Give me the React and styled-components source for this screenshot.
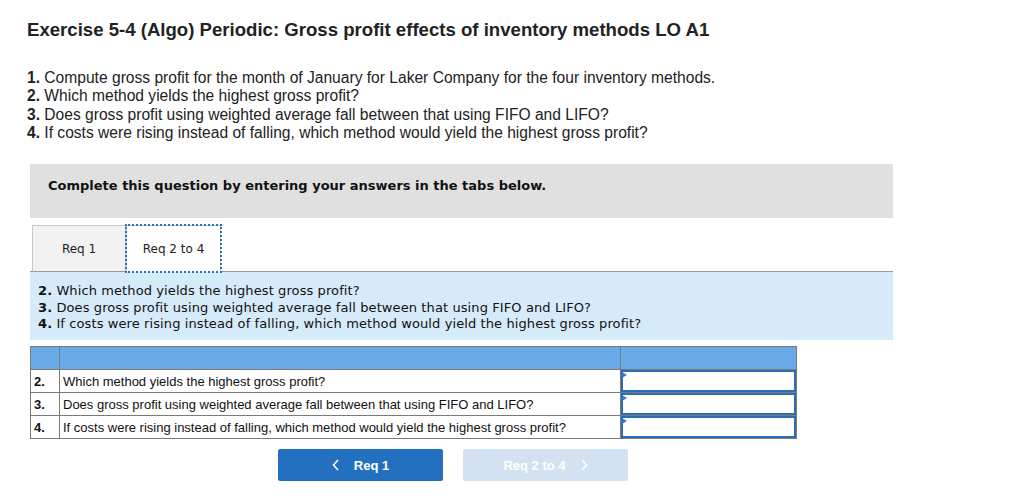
import React from 'react';
import styled, { createGlobalStyle } from 'styled-components';

const GlobalStyle = createGlobalStyle`
  html, body {
    margin: 0;
    padding: 0;
    background: #fff;
  }
  body {
    font-family: 'Liberation Sans', Arial, sans-serif;
    color: #222;
  }
`;

const Page = styled.div`
  width: 1025px;
  padding: 19px 0 0 27px;
  box-sizing: border-box;
`;

const Title = styled.h1`
  margin: 0;
  font-size: 18.6px;
  line-height: 22px;
  font-weight: 700;
  color: #222;
`;

const Intro = styled.ol`
  list-style: none;
  margin: 28px 0 0;
  padding: 0;
  font-size: 15.6px;
  line-height: 18.3px;
  color: #222;
`;

const Num = styled.b`
  font-weight: 700;
`;

const Work = styled.div`
  margin: 22px 0 0 3px;
  width: 863px;
`;

const Prompt = styled.div`
  background: #e0e0e0;
  height: 54px;
  box-sizing: border-box;
  padding: 14px 0 0 18px;
  font-family: 'DejaVu Sans', Verdana, sans-serif;
  font-size: 13px;
  line-height: 16px;
  font-weight: 700;
  color: #111;
`;

const Tabs = styled.div`
  display: flex;
  margin-top: 7px;
  padding-left: 2px;
  border-bottom: 1px solid #999;
`;

const Tab = styled.button`
  width: ${({ wide }) => (wide ? 95 : 94)}px;
  height: 47px;
  margin: 0;
  margin-bottom: -1px;
  box-sizing: border-box;
  border: 1px solid #c8c8c8;
  border-bottom: ${({ active }) => (active ? '1px solid #fff' : '1px solid #999')};
  background: ${({ active }) => (active ? '#fff' : '#f2f2f2')};
  outline: ${({ active }) => (active ? '2px dotted #2a72c4' : 'none')};
  outline-offset: -1px;
  font-family: 'DejaVu Sans', Verdana, sans-serif;
  font-size: 12px;
  color: #222;
  padding: 1px 0 0;
`;

const Questions = styled.div`
  background: #d6ebfa;
  padding: 11px 8px 11px;
  height: 68px;
  box-sizing: border-box;
  font-family: 'DejaVu Sans', Verdana, sans-serif;
  font-size: 13px;
  line-height: 16.5px;
  letter-spacing: 0.1px;
  color: #111;
`;

const Table = styled.table`
  margin-top: 6px;
  width: 767px;
  border-collapse: collapse;
  font-family: 'Liberation Sans', Arial, sans-serif;
  font-size: 13px;
  color: #111;
`;

const HeadCell = styled.th`
  background: #69aae9;
  border: 1px solid #7a7a7a;
  height: 22px;
  padding: 0;
  width: ${({ w }) => (w ? `${w}px` : 'auto')};
`;

const Cell = styled.td`
  border: 1px solid #7a7a7a;
  height: 22px;
  padding: 0 0 0 3px;
  font-weight: ${({ bold }) => (bold ? 700 : 400)};
  width: ${({ w }) => (w ? `${w}px` : 'auto')};
`;

const InputCell = styled.td`
  border: 1px solid #7a7a7a;
  padding: 0;
  width: 175px;
  height: 22px;
`;

const Answer = styled.div`
  position: relative;
  height: 22px;
  box-sizing: border-box;
  border: 2px solid #2c6cb3;
  background: #fff;
  &::before {
    content: '';
    position: absolute;
    left: -1px;
    top: 0;
    border-left: 5px solid #2c7be0;
    border-top: 3px solid transparent;
    border-bottom: 3px solid transparent;
  }
`;

const Nav = styled.div`
  display: flex;
  gap: 20px;
  margin: 10px 0 0 248px;
`;

const NavButton = styled.button`
  width: 165px;
  height: 32px;
  border: none;
  border-radius: 2px;
  background: ${({ disabled }) => (disabled ? '#d3e2f3' : '#2470c0')};
  color: #fff;
  font-family: 'Liberation Sans', Arial, sans-serif;
  font-size: 13px;
  font-weight: 700;
  display: flex;
  align-items: center;
  justify-content: center;
  gap: 14px;
  padding: 0;
`;

const Chevron = ({ dir }) => (
  <svg width="8" height="12" viewBox="0 0 8 12">
    <path
      d={dir === 'left' ? 'M6 1 L1.5 6 L6 11' : 'M2 1 L6.5 6 L2 11'}
      fill="none"
      stroke="#fff"
      strokeWidth="1.6"
    />
  </svg>
);

const rows = [
  ['2.', 'Which method yields the highest gross profit?'],
  ['3.', 'Does gross profit using weighted average fall between that using FIFO and LIFO?'],
  ['4.', 'If costs were rising instead of falling, which method would yield the highest gross profit?'],
];

const App = () => (
  <>
    <GlobalStyle />
    <Page>
      <Title>Exercise 5-4 (Algo) Periodic: Gross profit effects of inventory methods LO A1</Title>
      <Intro>
        <li><Num>1.</Num> Compute gross profit for the month of January for Laker Company for the four inventory methods.</li>
        <li><Num>2.</Num> Which method yields the highest gross profit?</li>
        <li><Num>3.</Num> Does gross profit using weighted average fall between that using FIFO and LIFO?</li>
        <li><Num>4.</Num> If costs were rising instead of falling, which method would yield the highest gross profit?</li>
      </Intro>
      <Work>
        <Prompt>Complete this question by entering your answers in the tabs below.</Prompt>
        <Tabs>
          <Tab>Req 1</Tab>
          <Tab active wide>Req 2 to 4</Tab>
        </Tabs>
        <Questions>
          <div><Num>2.</Num> Which method yields the highest gross profit?</div>
          <div><Num>3.</Num> Does gross profit using weighted average fall between that using FIFO and LIFO?</div>
          <div><Num>4.</Num> If costs were rising instead of falling, which method would yield the highest gross profit?</div>
        </Questions>
        <Table>
          <thead>
            <tr>
              <HeadCell w={28} />
              <HeadCell />
              <HeadCell w={175} />
            </tr>
          </thead>
          <tbody>
            {rows.map(([n, q]) => (
              <tr key={n}>
                <Cell bold w={25}>{n}</Cell>
                <Cell>{q}</Cell>
                <InputCell><Answer /></InputCell>
              </tr>
            ))}
          </tbody>
        </Table>
        <Nav>
          <NavButton><Chevron dir="left" />Req 1</NavButton>
          <NavButton disabled>Req 2 to 4<Chevron dir="right" /></NavButton>
        </Nav>
      </Work>
    </Page>
  </>
);

export default App;
